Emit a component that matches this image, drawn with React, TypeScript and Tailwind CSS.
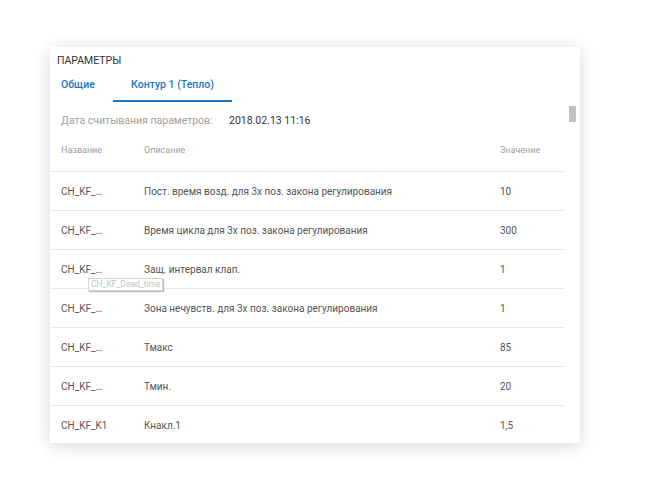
const rows = [
  { name: "CH_KF_…", desc: "Пост. время возд. для 3х поз. закона регулирования", value: "10" },
  { name: "CH_KF_…", desc: "Время цикла для 3х поз. закона регулирования", value: "300" },
  { name: "CH_KF_…", desc: "Защ. интервал клап.", value: "1" },
  { name: "CH_KF_…", desc: "Зона нечувств. для 3х поз. закона регулирования", value: "1" },
  { name: "CH_KF_…", desc: "Тмакс", value: "85" },
  { name: "CH_KF_…", desc: "Тмин.", value: "20" },
  { name: "CH_KF_K1", desc: "Кнакл.1", value: "1,5" },
];

export default function App() {
  return (
    <div className="w-[650px] h-[488px] bg-white pt-[47px] pl-[50px] font-['Roboto',sans-serif] overflow-hidden">
      <div className="relative w-[530px] h-[396px] bg-white shadow-[0_3px_16px_rgba(0,0,0,0.16)] flex overflow-hidden">
        {/* main content */}
        <div className="w-[514px] flex flex-col">
          <div className="h-[21px] shrink-0 pt-[7px] pl-[7px] text-[10.5px] leading-[13px] text-[#333] uppercase">
            Параметры
          </div>
          <div className="h-[34px] shrink-0 flex text-[10.5px] font-medium text-[#1a76c2]">
            <div className="w-[63px] pl-[11px] flex items-center">Общие</div>
            <div className="w-[119px] flex items-center justify-center border-b-2 border-[#1a76c2] pt-[2px]">
              Контур 1 (Тепло)
            </div>
          </div>
          <div className="h-[38px] shrink-0 flex items-center pl-[11px] text-[10.5px] whitespace-nowrap">
            <span className="text-[#9e9e9e] w-[168px] shrink-0">Дата считывания параметров:</span>
            <span className="text-[#333]">2018.02.13 11:16</span>
          </div>
          <div className="h-[32px] shrink-0 flex pl-[11px] pt-[4px] text-[9px] leading-[12px] text-[#a0a0a0] border-b border-[#e8e8e8]">
            <div className="w-[83px]">Название</div>
            <div className="w-[356px]">Описание</div>
            <div>Значение</div>
          </div>
          {rows.map((r, i) => (
            <div
              key={i}
              className="h-[39px] shrink-0 flex items-center pl-[11px] text-[10px] text-[#555] border-b border-[#e8e8e8]"
            >
              <div className="w-[83px]">{r.name}</div>
              <div className="w-[356px]">{r.desc}</div>
              <div>{r.value}</div>
            </div>
          ))}
        </div>
        {/* scrollbar */}
        <div className="w-[16px] pt-[59px] pl-[5px]">
          <div className="w-[7px] h-[16px] bg-[#c1c1c1]" />
        </div>
        {/* tooltip */}
        <div className="absolute left-[38px] top-[231px] px-[2px] h-[13px] flex items-center bg-white border border-[#d4d4d4] shadow-[1px_1px_1px_rgba(0,0,0,0.25)] text-[8.5px] leading-[11px] text-[#c4c4c4]">
          CH_KF_Dead_time
        </div>
      </div>
    </div>
  );
}
